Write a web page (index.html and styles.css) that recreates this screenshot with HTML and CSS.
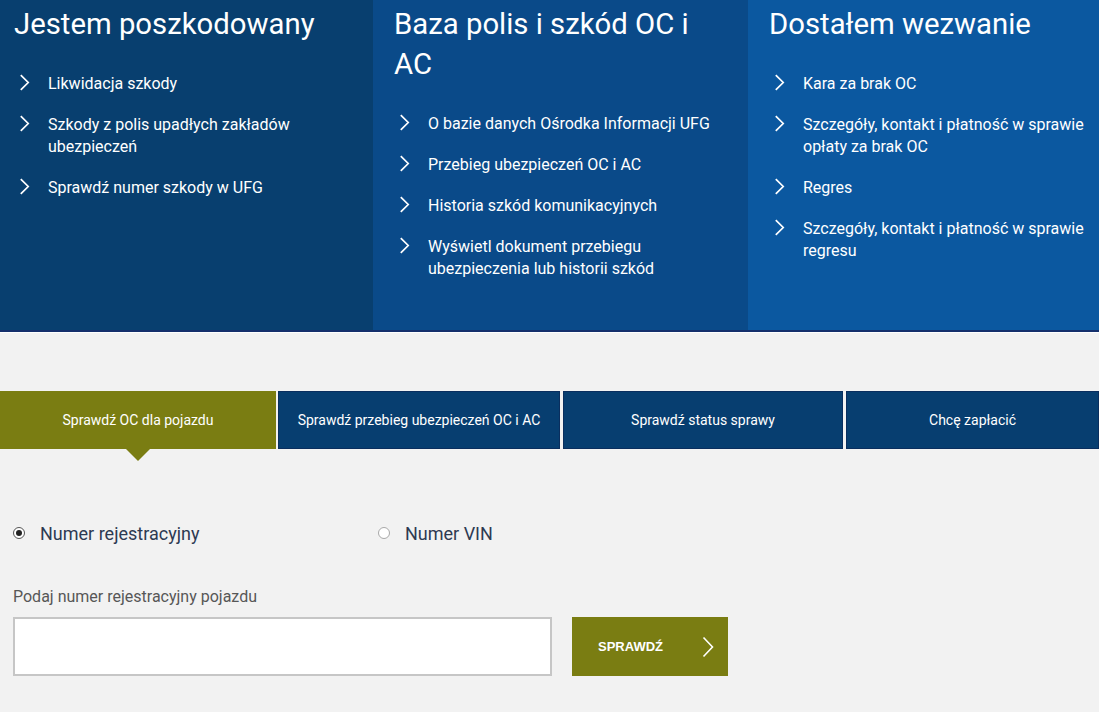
FILE: index.html
```html
<!DOCTYPE html>
<html lang="pl">
<head>
<meta charset="utf-8">
<title>UFG</title>
<link rel="stylesheet" href="styles.css">
</head>
<body>
<section class="panels">
  <div class="panel p1">
    <h2 class="panel-title">Jestem poszkodowany</h2>
    <ul class="links">
      <li><span class="chev"><svg viewBox="0 0 10 16"><path d="M1.5 1 L8.5 8 L1.5 15"/></svg></span><span>Likwidacja szkody</span></li>
      <li><span class="chev"><svg viewBox="0 0 10 16"><path d="M1.5 1 L8.5 8 L1.5 15"/></svg></span><span>Szkody z polis upadłych zakładów ubezpieczeń</span></li>
      <li><span class="chev"><svg viewBox="0 0 10 16"><path d="M1.5 1 L8.5 8 L1.5 15"/></svg></span><span>Sprawdź numer szkody w UFG</span></li>
    </ul>
  </div>
  <div class="panel p2">
    <h2 class="panel-title">Baza polis i szkód OC i AC</h2>
    <ul class="links">
      <li><span class="chev"><svg viewBox="0 0 10 16"><path d="M1.5 1 L8.5 8 L1.5 15"/></svg></span><span>O bazie danych Ośrodka Informacji UFG</span></li>
      <li><span class="chev"><svg viewBox="0 0 10 16"><path d="M1.5 1 L8.5 8 L1.5 15"/></svg></span><span>Przebieg ubezpieczeń OC i AC</span></li>
      <li><span class="chev"><svg viewBox="0 0 10 16"><path d="M1.5 1 L8.5 8 L1.5 15"/></svg></span><span>Historia szkód komunikacyjnych</span></li>
      <li><span class="chev"><svg viewBox="0 0 10 16"><path d="M1.5 1 L8.5 8 L1.5 15"/></svg></span><span>Wyświetl dokument przebiegu ubezpieczenia lub historii szkód</span></li>
    </ul>
  </div>
  <div class="panel p3">
    <h2 class="panel-title">Dostałem wezwanie</h2>
    <ul class="links">
      <li><span class="chev"><svg viewBox="0 0 10 16"><path d="M1.5 1 L8.5 8 L1.5 15"/></svg></span><span>Kara za brak OC</span></li>
      <li><span class="chev"><svg viewBox="0 0 10 16"><path d="M1.5 1 L8.5 8 L1.5 15"/></svg></span><span>Szczegóły, kontakt i płatność w sprawie opłaty za brak OC</span></li>
      <li><span class="chev"><svg viewBox="0 0 10 16"><path d="M1.5 1 L8.5 8 L1.5 15"/></svg></span><span>Regres</span></li>
      <li><span class="chev"><svg viewBox="0 0 10 16"><path d="M1.5 1 L8.5 8 L1.5 15"/></svg></span><span>Szczegóły, kontakt i płatność w sprawie regresu</span></li>
    </ul>
  </div>
</section>

<nav class="tabs">
  <div class="tab active t1">Sprawdź OC dla pojazdu</div>
  <div class="tab t2">Sprawdź przebieg ubezpieczeń OC i AC</div>
  <div class="tab t3">Sprawdź status sprawy</div>
  <div class="tab t4">Chcę zapłacić</div>
</nav>

<section class="form">
  <div class="radios">
    <label class="radio r1"><span class="dot checked"></span><span>Numer rejestracyjny</span></label>
    <label class="radio r2"><span class="dot"></span><span>Numer VIN</span></label>
  </div>
  <div class="field-label">Podaj numer rejestracyjny pojazdu</div>
  <div class="field-row">
    <div class="input"></div>
    <button class="btn">SPRAWDŹ<svg class="btn-chev" viewBox="0 0 12 22"><path d="M1.5 1.5 L10.5 11 L1.5 20.5"/></svg></button>
  </div>
</section>
</body>
</html>
```

FILE: styles.css
```css
* { box-sizing: border-box; }
html, body { margin: 0; padding: 0; }
body {
  background: #f2f2f2;
  font-family: Roboto, "Liberation Sans", Arial, sans-serif;
  width: 1099px;
  height: 712px;
  overflow: hidden;
}

.panels {
  display: flex;
  height: 332px;
  border-bottom: 2px solid #15306c;
  box-shadow: 0 1px 0 #ffffff;
}
.panel {
  color: #fff;
  padding-top: 4px;
}
.p1 { width: 373px; background: #083f6f; padding-left: 14px; }
.p2 { width: 375px; background: #0a4a89; padding-left: 21px; padding-right: 20px; }
.p3 { flex: 1; background: #0b58a0; padding-left: 21px; padding-right: 10px; }

.panel-title {
  margin: 0;
  font-weight: 400;
  font-size: 29.3px;
  line-height: 40px;
}
.links {
  list-style: none;
  margin: 29px 0 0;
  padding: 0;
}
.links li {
  display: flex;
  align-items: flex-start;
  font-size: 16px;
  line-height: 22px;
  margin-bottom: 19px;
}
.chev {
  width: 34px;
  flex: none;
  padding-left: 5px;
  padding-top: 1px;
}
.chev svg {
  width: 11px;
  height: 17px;
  display: block;
  fill: none;
  stroke: #fff;
  stroke-width: 1.6;
}

.tabs {
  display: flex;
  margin-top: 59px;
  height: 58px;
}
.tab {
  height: 58px;
  display: flex;
  align-items: center;
  justify-content: center;
  color: #fff;
  font-size: 14px;
  background: #073e70;
  border: 1px solid #0a2e5e;
  position: relative;
}
.t1 { width: 276px; }
.t2 { width: 282px; margin-left: 2px; }
.t3 { width: 280px; margin-left: 3px; }
.t4 { flex: 1; margin-left: 3px; }
.tab.active {
  background: #7a7d12;
  border-color: #7a7d12;
}
.tab.active::after {
  content: "";
  position: absolute;
  left: 50%;
  bottom: -13px;
  margin-left: -12px;
  border-left: 12px solid transparent;
  border-right: 12px solid transparent;
  border-top: 12px solid #7a7d12;
}

.form {
  padding-left: 13px;
}
.radios {
  display: flex;
  margin-top: 73px;
  height: 22px;
  align-items: center;
}
.radio {
  display: flex;
  align-items: center;
  font-size: 18px;
  color: #2d3a52;
}
.r1 { width: 365px; }
.dot {
  width: 12px;
  height: 12px;
  border-radius: 50%;
  border: 1px solid #9a9a9a;
  background: #fff;
  margin-right: 15px;
  position: relative;
  flex: none;
}
.r2 .dot { margin-right: 15px; border-color: #a8a8a8; }
.dot.checked { border-color: #555; }
.dot.checked::after {
  content: "";
  position: absolute;
  left: 2px;
  top: 2px;
  width: 6px;
  height: 6px;
  border-radius: 50%;
  background: #222;
}

.field-label {
  margin-top: 43px;
  font-size: 16px;
  line-height: 20px;
  color: #575757;
}
.field-row {
  display: flex;
  margin-top: 10px;
  align-items: flex-start;
}
.input {
  width: 539px;
  height: 59px;
  background: #fff;
  border: 2px solid #c6c6c6;
}
.btn {
  margin-left: 20px;
  width: 156px;
  height: 59px;
  background: #7a7d12;
  border: none;
  color: #fff;
  font-family: "Liberation Sans", Arial, sans-serif;
  font-weight: 700;
  font-size: 13px;
  display: flex;
  align-items: center;
  padding: 0 0 0 26px;
  cursor: pointer;
}
.btn-chev {
  width: 12px;
  height: 22px;
  margin-left: 39px;
  fill: none;
  stroke: #fff;
  stroke-width: 1.6;
}
```
